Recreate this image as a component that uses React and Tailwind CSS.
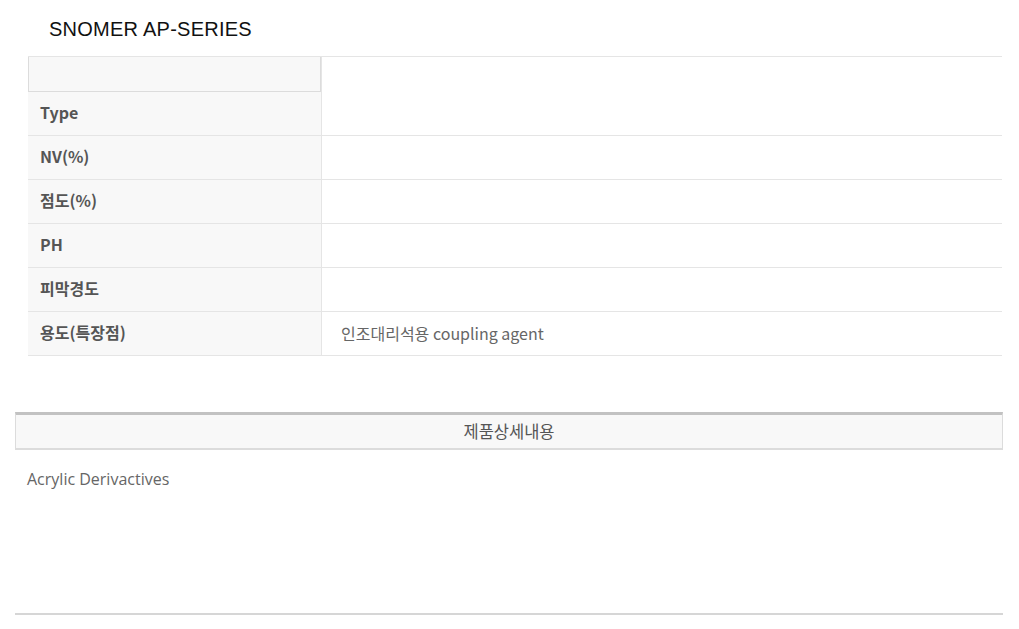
const rows = [
  { label: 'NV(%)', value: '' },
  { label: '점도(%)', value: '' },
  { label: 'PH', value: '' },
  { label: '피막경도', value: '' },
  { label: '용도(특장점)', value: '인조대리석용 coupling agent' },
]

const ko = { fontFamily: '"Noto Sans CJK KR", "Noto Sans", sans-serif' }

export default function App() {
  return (
    <div className="min-h-screen bg-white">
      <h1
        className="pl-[49px] pt-[17px] h-[56px] text-[20px] leading-[24px] tracking-[0.25px] text-[#111]"
        style={{ fontFamily: '"Liberation Sans", Arial, sans-serif' }}
      >
        SNOMER AP-SERIES
      </h1>

      <div className="ml-[28px] w-[974px] border-t border-[#e5e5e5]" style={ko}>
        <div className="flex border-b border-[#e5e5e5]">
          <div className="w-[293px] shrink-0">
            <div className="h-[35px] bg-[#f8f8f8] border border-t-0 border-[#dcdcdc]" />
            <div className="h-[43px] bg-[#f8f8f8] flex items-center pl-[12px] pb-[3px] text-[16px] font-bold text-[#555]">
              Type
            </div>
          </div>
          <div className="flex-1 border-l border-[#e5e5e5]" />
        </div>
        {rows.map((r) => (
          <div key={r.label} className="flex h-[44px] border-b border-[#e5e5e5]">
            <div className="w-[293px] shrink-0 bg-[#f8f8f8] flex items-center pl-[12px] pb-[3px] text-[16px] font-bold text-[#555]">
              {r.label}
            </div>
            <div className="flex-1 border-l border-[#e5e5e5] flex items-center pl-[19px] pb-[2px] text-[16px] text-[#666]">
              {r.value}
            </div>
          </div>
        ))}
      </div>

      <div className="ml-[15px] w-[988px] mt-[56px]" style={ko}>
        <div className="h-[38px] bg-[#f8f8f8] border-x border-[#dcdcdc] border-t-[3px] border-t-[#c2c2c2] border-b-2 border-b-[#dcdcdc] flex items-center justify-center text-[16.5px] text-[#555]">
          제품상세내용
        </div>
        <div
          className="h-[165px] pl-[12px] pt-[17px] text-[16px] text-[#666] border-b-2 border-[#d6d6d6]"
          style={{ fontFamily: '"Open Sans", "Noto Sans", sans-serif' }}
        >
          Acrylic Derivactives
        </div>
      </div>
    </div>
  )
}
